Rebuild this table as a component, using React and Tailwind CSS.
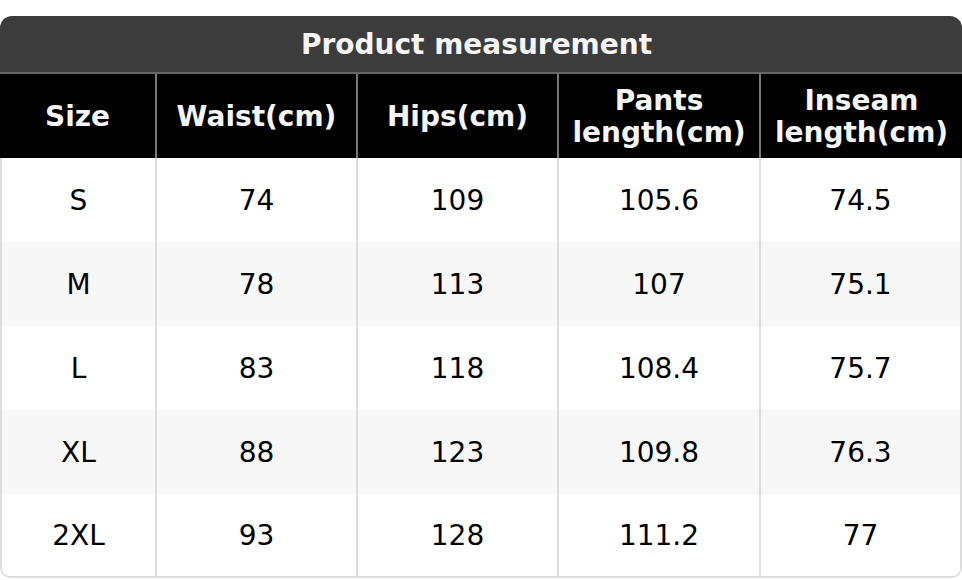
import React from "react";

const headers = ["Size", ["Waist(cm)"], ["Hips(cm)"], ["Pants", "length(cm)"], ["Inseam", "length(cm)"]];

const rows = [
  ["S", "74", "109", "105.6", "74.5"],
  ["M", "78", "113", "107", "75.1"],
  ["L", "83", "118", "108.4", "75.7"],
  ["XL", "88", "123", "109.8", "76.3"],
  ["2XL", "93", "128", "111.2", "77"],
];

export default function App() {
  return (
    <div
      className="w-[962px] h-[580px] bg-white pt-[16px]"
      style={{ fontFamily: '"DejaVu Sans", sans-serif' }}
    >
      <div className="rounded-t-[12px] rounded-b-[10px] overflow-hidden">
        {/* Title */}
        <div className="h-[58px] bg-[#3c3c3c] flex items-center justify-center pr-[9px] pt-[1px] text-[28px] font-bold text-[#f5f5f5] border-b-2 border-[#666]">
          Product measurement
        </div>

        {/* Column headers */}
        <div className="grid grid-cols-[155px_201px_201px_202px_1fr] h-[84px] bg-black text-[28px] font-bold leading-[32px] text-[#f5f5f5]">
          {headers.map((h, i) => (
            <div
              key={i}
              className={`flex flex-col items-center justify-center pt-[1px] ${i > 0 ? "border-l-2 border-[#777]" : ""}`}
            >
              {(Array.isArray(h) ? h : [h]).map((line) => (
                <span key={line}>{line}</span>
              ))}
            </div>
          ))}
        </div>

        {/* Body */}
        <div className="border-x-2 border-b-2 border-[#dcdcdc] rounded-b-[10px] overflow-hidden">
          {rows.map((row, r) => (
            <div
              key={r}
              className={`grid grid-cols-[153px_201px_201px_202px_1fr] text-[28px] text-black ${r % 2 === 1 ? "bg-[#f7f7f7]" : "bg-white"} ${r === rows.length - 1 ? "h-[82px]" : "h-[84px]"}`}
            >
              {row.map((cell, c) => (
                <div
                  key={c}
                  className={`flex items-center justify-center pt-[1px] ${c > 0 ? "border-l-2 border-[#dcdcdc]" : ""}`}
                >
                  {cell}
                </div>
              ))}
            </div>
          ))}
        </div>
      </div>
    </div>
  );
}
